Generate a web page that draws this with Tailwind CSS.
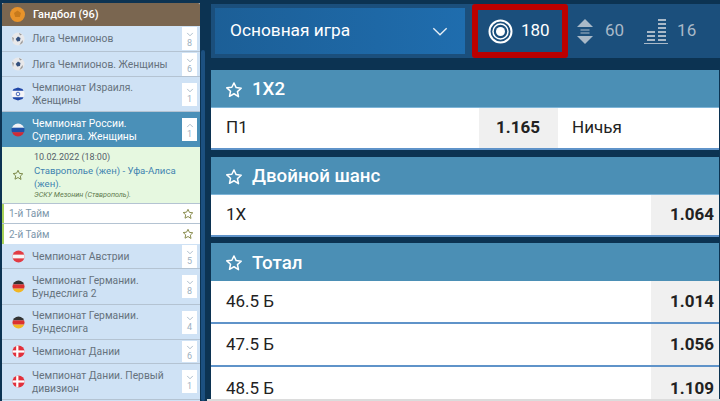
<!DOCTYPE html>
<html lang="ru"><head><meta charset="utf-8">
<script src="https://cdn.jsdelivr.net/npm/@tailwindcss/browser@4"></script>
</head>
<body class="m-0 bg-[#0c3352]">
<svg width="0" height="0" class="absolute">
<defs>
<symbol id="star" viewBox="0 0 24 24"><path d="M12 2.600l2.900 6.200 6.700.8-5 4.600 1.400 6.700L12 17l-6 3.400 1.400-6.700-5-4.600 6.700-.8z" fill="none" stroke="currentColor" stroke-width="2" stroke-linejoin="round"/></symbol>
<symbol id="chev" viewBox="0 0 12 8"><path d="M1.500 1.500L6 6l4.500-4.500" fill="none" stroke="currentColor" stroke-width="1.300"/></symbol>
<symbol id="ball" viewBox="0 0 14 14"><circle cx="7" cy="7" r="6.500" fill="#e8e8ea"/><path d="M7 4.500l2.500 1.500-.6 3-2.700.6L4.700 7z" fill="#33507e"/><path d="M1 5l2 1-1 4zM8 1l3 1.500-2 1zM10 10l2-2-.5 3-3 2z" fill="#9a9a9a"/></symbol>
<symbol id="il" viewBox="0 0 14 14"><circle cx="7" cy="7" r="6.500" fill="#f4f4f8"/><path d="M1.500 3.800h11l-1-1.800-4.500-1.500-4.500 1.500zM1.500 10.200h11l-1 1.800-4.500 1.500-4.500-1.500z" fill="#1f47a8"/><circle cx="7" cy="7" r="1.800" fill="none" stroke="#1f47a8" stroke-width=".8"/></symbol>
<symbol id="ru" viewBox="0 0 14 14"><clipPath id="c1"><circle cx="7" cy="7" r="6.500"/></clipPath><g clip-path="url(#c1)"><rect width="14" height="4.800" fill="#f2f2f5"/><rect y="4.800" width="14" height="4.400" fill="#1e4fa8"/><rect y="9.200" width="14" height="4.800" fill="#cf2a36"/></g></symbol>
<symbol id="at" viewBox="0 0 14 14"><clipPath id="c2"><circle cx="7" cy="7" r="6.500"/></clipPath><g clip-path="url(#c2)"><rect width="14" height="14" fill="#e23c44"/><rect y="5" width="14" height="4" fill="#f6f6f6"/></g></symbol>
<symbol id="de" viewBox="0 0 14 14"><clipPath id="c3"><circle cx="7" cy="7" r="6.500"/></clipPath><g clip-path="url(#c3)"><rect width="14" height="4.700" fill="#333"/><rect y="4.700" width="14" height="4.600" fill="#dc3030"/><rect y="9.300" width="14" height="4.700" fill="#f2b624"/></g></symbol>
<symbol id="dk" viewBox="0 0 14 14"><clipPath id="c4"><circle cx="7" cy="7" r="6.500"/></clipPath><g clip-path="url(#c4)"><rect width="14" height="14" fill="#e2303c"/><rect x="4.500" width="2.400" height="14" fill="#fff"/><rect y="5.800" width="14" height="2.400" fill="#fff"/></g></symbol>
</defs>
</svg>
<div class="relative w-[720px] h-[401px] overflow-hidden flex font-['Roboto',sans-serif]">

<aside class="w-[210px] shrink-0 pt-[3px] pl-[2px] flex">
  <div class="w-[198px] shrink-0 bg-[#b4c3d2] text-[10.3px] leading-[13px] text-[#66727d]">
    <div class="h-[23px] bg-[#7a6650] rounded-t-[2px] flex items-center pl-[8px] gap-[8px] text-[11px] text-white font-medium">
      <svg width="15" height="15" viewBox="0 0 15 15"><circle cx="7.500" cy="7.500" r="7.500" fill="#e8932a"/><path d="M7.500 3.500l3.500 2.500-1.200 4H5.200L4 6z" fill="#c77a1c"/></svg>
      <span>Гандбол (96)</span>
    </div>

    <div class="h-[25px] mb-[1px] bg-[#cfe2f5] flex items-center pl-[9px] pr-[3px]">
      <svg class="w-[14px] h-[14px] mr-[7px] shrink-0"><use href="#ball"/></svg><span class="flex-1">Лига Чемпионов</span>
      <div class="w-[15px] h-[23px] bg-white flex flex-col items-center pt-[5px] text-[#9db0c0] text-[9px] leading-[9px]"><svg class="w-[8px] h-[5px] mb-[2px]"><use href="#chev"/></svg>8</div>
    </div>
    <div class="h-[24px] mb-[1px] bg-[#cfe2f5] flex items-center pl-[9px] pr-[3px]">
      <svg class="w-[14px] h-[14px] mr-[7px] shrink-0"><use href="#ball"/></svg><span class="flex-1">Лига Чемпионов. Женщины</span>
      <div class="w-[15px] h-[23px] bg-white flex flex-col items-center pt-[5px] text-[#9db0c0] text-[9px] leading-[9px]"><svg class="w-[8px] h-[5px] mb-[2px]"><use href="#chev"/></svg>6</div>
    </div>
    <div class="h-[34px] mb-[1px] bg-[#cfe2f5] flex items-center pl-[9px] pr-[3px]">
      <svg class="w-[14px] h-[14px] mr-[7px] shrink-0"><use href="#il"/></svg><span class="flex-1">Чемпионат Израиля. Женщины</span>
      <div class="w-[15px] h-[23px] bg-white flex flex-col items-center pt-[5px] text-[#9db0c0] text-[9px] leading-[9px]"><svg class="w-[8px] h-[5px] mb-[2px]"><use href="#chev"/></svg>1</div>
    </div>
    <div class="h-[35px] bg-[#4a90b8] text-white flex items-center pl-[9px] pr-[3px]">
      <svg class="w-[14px] h-[14px] mr-[7px] shrink-0"><use href="#ru"/></svg><span class="flex-1">Чемпионат России. Суперлига. Женщины</span>
      <div class="w-[15px] h-[23px] bg-white flex flex-col items-center pt-[5px] text-[#9db0c0] text-[9px] leading-[9px]"><svg class="w-[8px] h-[5px] mb-[2px] rotate-180"><use href="#chev"/></svg>1</div>
    </div>

    <div class="h-[56px] bg-[#e6f8e0] mb-[1px] flex items-center pl-[10px] pr-[3px] pb-[1px]">
      <svg class="w-[12px] h-[12px] mr-[10px] shrink-0 text-[#7d8a4a]"><use href="#star"/></svg>
      <div class="text-[9.6px] leading-[13px]">
        <div class="text-[9px] text-[#55606a]">10.02.2022 (18:00)</div>
        <div class="text-[#3f83b0]">Ставрополье (жен) - Уфа-Алиса (жен).</div>
        <div class="text-[7.2px] leading-[9px] italic text-[#5e7a4e]">ЭСКУ Мезонин (Ставрополь).</div>
      </div>
    </div>
    <div class="h-[19px] mb-[1px] bg-white border-l-2 border-[#a9d35a] flex items-center pl-[5px] pr-[6px] text-[10px] text-[#7d97ab]"><span class="flex-1">1-й Тайм</span><svg class="w-[12px] h-[12px] text-[#8a8d4e]"><use href="#star"/></svg></div>
    <div class="h-[20px] bg-white border-l-2 border-[#a9d35a] flex items-center pl-[5px] pr-[6px] text-[10px] text-[#7d97ab]"><span class="flex-1">2-й Тайм</span><svg class="w-[12px] h-[12px] text-[#8a8d4e]"><use href="#star"/></svg></div>

    <div class="h-[24px] mb-[1px] bg-[#cfe2f5] flex items-center pl-[10px] pr-[3px] overflow-hidden">
      <svg class="w-[13px] h-[13px] mr-[7px] shrink-0"><use href="#at"/></svg><span class="flex-1">Чемпионат Австрии</span>
      <div class="w-[15px] h-[23px] bg-white flex flex-col items-center pt-[5px] text-[#9db0c0] text-[9px] leading-[9px]"><svg class="w-[8px] h-[5px] mb-[2px]"><use href="#chev"/></svg>5</div>
    </div>
    <div class="h-[35px] mb-[1px] bg-[#cfe2f5] flex items-center pl-[10px] pr-[3px]">
      <svg class="w-[13px] h-[13px] mr-[7px] shrink-0"><use href="#de"/></svg><span class="flex-1">Чемпионат Германии. Бундеслига 2</span>
      <div class="w-[15px] h-[23px] bg-white flex flex-col items-center pt-[5px] text-[#9db0c0] text-[9px] leading-[9px]"><svg class="w-[8px] h-[5px] mb-[2px]"><use href="#chev"/></svg>8</div>
    </div>
    <div class="h-[34px] mb-[1px] bg-[#cfe2f5] flex items-center pl-[10px] pr-[3px]">
      <svg class="w-[13px] h-[13px] mr-[7px] shrink-0"><use href="#de"/></svg><span class="flex-1">Чемпионат Германии. Бундеслига</span>
      <div class="w-[15px] h-[23px] bg-white flex flex-col items-center pt-[5px] text-[#9db0c0] text-[9px] leading-[9px]"><svg class="w-[8px] h-[5px] mb-[2px]"><use href="#chev"/></svg>4</div>
    </div>
    <div class="h-[23px] mb-[1px] bg-[#cfe2f5] flex items-center pl-[10px] pr-[3px]">
      <svg class="w-[13px] h-[13px] mr-[7px] shrink-0"><use href="#dk"/></svg><span class="flex-1">Чемпионат Дании</span>
      <div class="w-[15px] h-[21px] bg-white flex flex-col items-center pt-[4px] text-[#9db0c0] text-[9px] leading-[9px]"><svg class="w-[8px] h-[5px] mb-[2px]"><use href="#chev"/></svg>6</div>
    </div>
    <div class="h-[35px] mb-[1px] bg-[#cfe2f5] flex items-center pl-[10px] pr-[3px]">
      <svg class="w-[13px] h-[13px] mr-[7px] shrink-0"><use href="#dk"/></svg><span class="flex-1">Чемпионат Дании. Первый дивизион</span>
      <div class="w-[15px] h-[23px] bg-white flex flex-col items-center pt-[5px] text-[#9db0c0] text-[9px] leading-[9px]"><svg class="w-[8px] h-[5px] mb-[2px]"><use href="#chev"/></svg>1</div>
    </div>
    <div class="h-[10px] bg-[#cfe2f5]"></div>
  </div>
  <div class="w-[4px] ml-[1px] mt-[47px] h-[351px] bg-[#1c5080] rounded-full shrink-0"></div>
</aside>

<main class="flex-1 min-w-0 pt-[4px] pl-[1px]">
  <div class="h-[54px] bg-[#1b4f7c] flex items-center">
    <div class="ml-[4px] w-[250px] h-[46px] bg-gradient-to-r from-[#1c5f97] to-[#1f6dae] flex items-center justify-between pl-[15px] pr-[17px] text-white text-[17.3px]">
      <span>Основная игра</span>
      <svg class="w-[16px] h-[11px] text-[#e6eef5]" viewBox="0 0 12 8"><path d="M1 1.500L6 6.500l5-5" fill="none" stroke="currentColor" stroke-width="1"/></svg>
    </div>
    <div class="ml-[7px] w-[96px] h-[54px] border-[6px] border-[#bb0000] rounded-[3px] flex items-center pl-[10px] text-white text-[17px]">
      <svg class="w-[25px] h-[25px] shrink-0 mr-[8px]" viewBox="0 0 25 25"><circle cx="12.500" cy="12.500" r="11" fill="none" stroke="#fff" stroke-width="2"/><circle cx="12.500" cy="12.500" r="7.500" fill="none" stroke="#fff" stroke-width="1.500"/><circle cx="12.500" cy="12.500" r="4.500" fill="#fff"/></svg>
      <span>180</span>
    </div>
    <div class="ml-[9px] flex items-center text-[#a9b9c8] text-[17px]">
      <svg class="w-[16px] h-[25px] mr-[12px]" viewBox="0 0 16 25"><path d="M8 0l8 8H0zM8 25l8-8H0z" fill="#a9b9c8"/><path d="M3.500 11h9M3.500 14h9" stroke="#a9b9c8" stroke-width="1.200"/></svg>
      <span>60</span>
      <svg class="w-[24px] h-[25px] ml-[20px] mr-[9px]" viewBox="0 0 24 25" fill="#a9b9c8"><rect x="14" y="0" width="8" height="2"/><rect x="14" y="4" width="8" height="2"/><rect x="14" y="8" width="8" height="2"/><rect x="3" y="12" width="8" height="2"/><rect x="14" y="12" width="8" height="2"/><rect x="3" y="16" width="8" height="2"/><rect x="14" y="16" width="8" height="2"/><rect x="3" y="20" width="8" height="2"/><rect x="14" y="20" width="8" height="2"/><rect x="0" y="24" width="24" height="1.500"/></svg>
      <span>16</span>
    </div>
  </div>

  <section class="mt-[12px] w-[508px]">
    <div class="h-[37px] pt-[2px] bg-[#4b8fb5] flex items-center pl-[14px] text-white text-[18.7px] font-medium"><svg class="w-[18px] h-[18px] mr-[9px]"><use href="#star"/></svg>1Х2</div>
    <div class="h-[43px] bg-white border-t border-b-2 border-t-[#7fb5d8] border-b-[#5f93c9] flex items-stretch text-[17px] text-[#222]">
      <div class="w-[268px] flex items-center pl-[15px]">П1</div>
      <div class="w-[79px] bg-[#f0f0f0] flex items-center justify-end pr-[18px] font-bold">1.165</div>
      <div class="flex items-center pl-[14px]">Ничья</div>
    </div>
  </section>
  <section class="mt-[7px] w-[508px]">
    <div class="h-[37px] pt-[2px] bg-[#4b8fb5] flex items-center pl-[14px] text-white text-[18.7px] font-medium"><svg class="w-[18px] h-[18px] mr-[9px]"><use href="#star"/></svg>Двойной шанс</div>
    <div class="h-[43px] bg-white border-t border-b-2 border-t-[#7fb5d8] border-b-[#5f93c9] flex items-stretch text-[17px] text-[#222]">
      <div class="flex-1 flex items-center pl-[15px]">1Х</div>
      <div class="w-[68px] bg-[#f0f0f0] flex items-center justify-end pr-[5px] font-bold">1.064</div>
    </div>
  </section>
  <section class="mt-[6px] w-[508px]">
    <div class="h-[38px] pt-[2px] bg-[#4b8fb5] flex items-center pl-[14px] text-white text-[18.7px] font-medium"><svg class="w-[18px] h-[18px] mr-[9px]"><use href="#star"/></svg>Тотал</div>
    <div class="h-[43px] bg-white border-b-2 border-[#5f93c9] flex items-stretch text-[17px] text-[#222]">
      <div class="flex-1 flex items-center pl-[15px]">46.5 Б</div>
      <div class="w-[68px] bg-[#f0f0f0] flex items-center justify-end pr-[5px] font-bold">1.014</div>
    </div>
    <div class="h-[43px] bg-white border-b-2 border-[#5f93c9] flex items-stretch text-[17px] text-[#222]">
      <div class="flex-1 flex items-center pl-[15px]">47.5 Б</div>
      <div class="w-[68px] bg-[#f0f0f0] flex items-center justify-end pr-[5px] font-bold">1.056</div>
    </div>
    <div class="h-[43px] bg-white flex items-stretch text-[17px] text-[#222]">
      <div class="flex-1 flex items-center pl-[15px]">48.5 Б</div>
      <div class="w-[68px] bg-[#f0f0f0] flex items-center justify-end pr-[5px] font-bold">1.109</div>
    </div>
  </section>
</main>
<div class="absolute left-[207px] right-0 bottom-0 h-[2px] bg-[#dcdcdc]"></div>
</div>
</body></html>
